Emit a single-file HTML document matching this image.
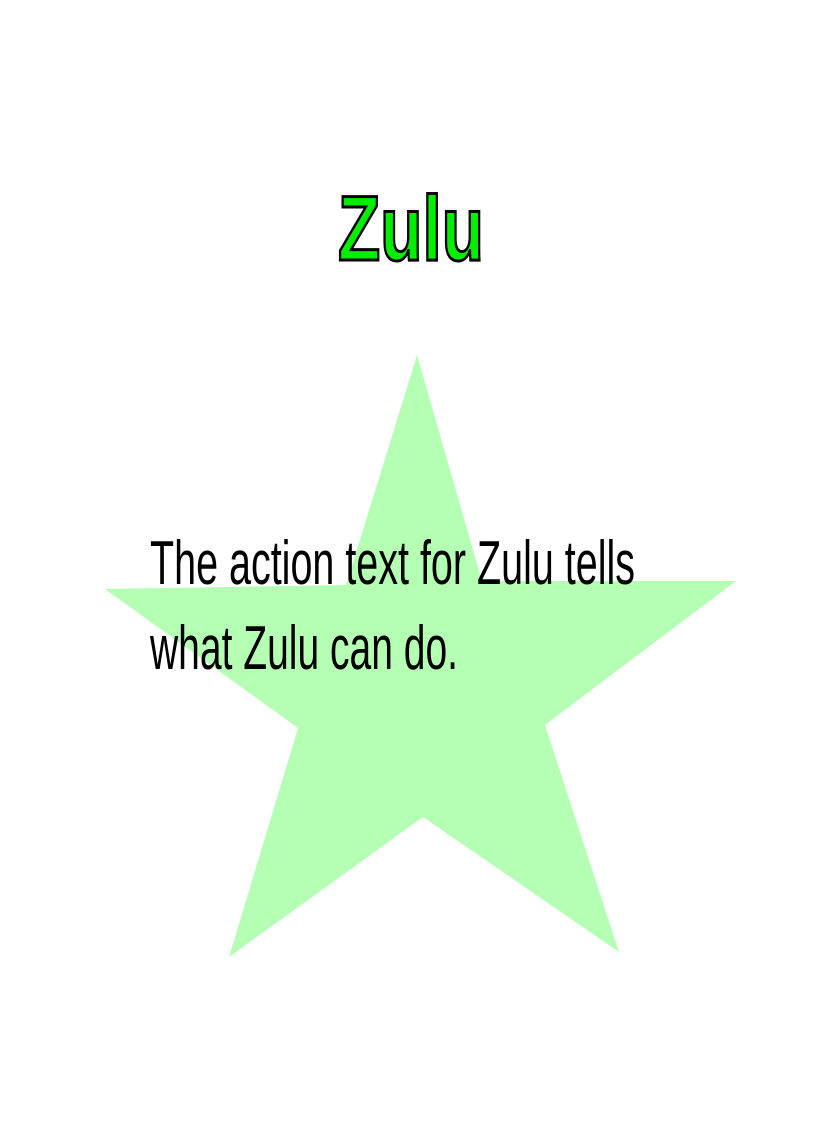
<!DOCTYPE html>
<html><head><meta charset="utf-8"><style>
html,body{margin:0;padding:0;background:#fff;width:825px;height:1125px;overflow:hidden}
</style></head><body>
<svg width="825" height="1125" viewBox="0 0 825 1125" xmlns="http://www.w3.org/2000/svg">
<polygon fill="#b5ffb5" points="417,355 482,581 736,581 545,725 619,952 423,817 229,957 298,728 105,589 346,585"/>
<text x="411" y="260" text-anchor="middle" font-family="Liberation Sans, sans-serif" font-weight="bold" font-size="92" fill="#00ee00" stroke="#000" stroke-width="3" textLength="146" lengthAdjust="spacingAndGlyphs">Zulu</text>
<text x="150" y="584" font-family="Liberation Sans, sans-serif" font-size="62" fill="#000" textLength="485" lengthAdjust="spacingAndGlyphs">The action text for Zulu tells</text>
<text x="150" y="669" font-family="Liberation Sans, sans-serif" font-size="62" fill="#000" textLength="308" lengthAdjust="spacingAndGlyphs">what Zulu can do.</text>
</svg>
</body></html>
